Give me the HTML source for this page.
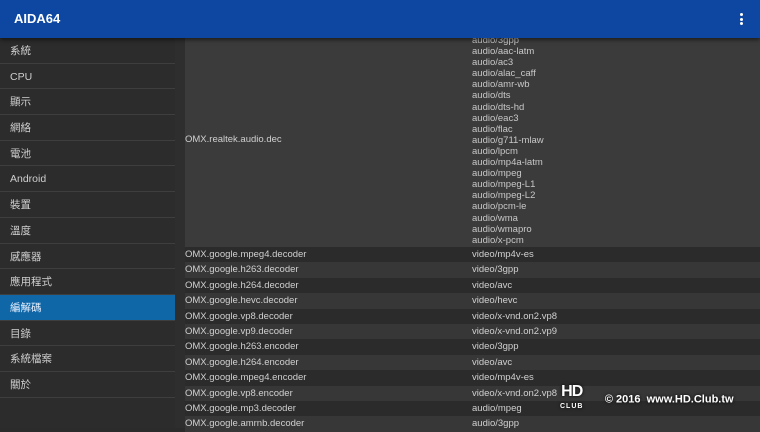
<!DOCTYPE html>
<html><head><meta charset="utf-8"><style>
*{margin:0;padding:0;box-sizing:border-box}
body{width:760px;height:428px;overflow:hidden;background:#2b2b2b;font-family:"Liberation Sans","Noto Sans CJK TC",sans-serif;color:#d0d0d0;position:relative}
#hdr{position:absolute;left:0;top:0;width:760px;height:38px;background:#0d47a1;box-shadow:0 2px 4px rgba(0,0,0,.5);z-index:5}
#hdr .t{position:absolute;left:14px;top:11px;font-size:13px;font-weight:bold;color:#fff}
#hdr .m{position:absolute;left:740px;top:13px;width:3px}
#hdr .m i{display:block;width:3px;height:3px;background:#fff;border-radius:50%;margin-bottom:1.5px}
#side{position:absolute;left:0;top:38px;width:175px;height:390px;background:#2c2c2c}
#side div{height:25.7px;line-height:26.5px;padding-left:10px;font-size:10.5px;color:#cfcfcf;border-bottom:1px solid #3e3e3e}
#side div.sel{background:#0f67a8;color:#e8f0ff}
#gap{position:absolute;left:175px;top:38px;width:10px;height:390px;background:#2e2e2e}
#tbl{position:absolute;left:185px;top:38px;width:575px}
.big{height:209px;background:#3b3b3b;position:relative;font-size:9.5px}
.big .n{position:absolute;left:0;top:96px}
.big .v{position:absolute;left:287px;top:-3px;line-height:11.1px;color:#c8c8c8}
.r{height:15.4px;line-height:15.4px;font-size:9.5px;position:relative;white-space:nowrap}
.r:nth-child(even){background:#2b2b2b}
.r:nth-child(odd){background:#373737}
.r span{position:absolute;left:287px}
#wm{position:absolute;left:560px;top:386px;color:#fff;font-size:11px;font-weight:bold;text-shadow:0 0 3px #000;white-space:nowrap}
</style></head><body>
<div id="hdr"><div class="t">AIDA64</div><div class="m"><i></i><i></i><i></i></div></div>
<div id="side">
<div>系統</div><div>CPU</div><div>顯示</div><div>網絡</div><div>電池</div><div>Android</div><div>裝置</div><div>溫度</div><div>感應器</div><div>應用程式</div><div class="sel">編解碼</div><div>目錄</div><div>系統檔案</div><div>關於</div>
</div>
<div id="gap"></div>
<div id="tbl">
<div class="big"><div class="n">OMX.realtek.audio.dec</div><div class="v">audio/3gpp<br>audio/aac-latm<br>audio/ac3<br>audio/alac_caff<br>audio/amr-wb<br>audio/dts<br>audio/dts-hd<br>audio/eac3<br>audio/flac<br>audio/g711-mlaw<br>audio/lpcm<br>audio/mp4a-latm<br>audio/mpeg<br>audio/mpeg-L1<br>audio/mpeg-L2<br>audio/pcm-le<br>audio/wma<br>audio/wmapro<br>audio/x-pcm</div></div>
<div class="r">OMX.google.mpeg4.decoder<span>video/mp4v-es</span></div>
<div class="r">OMX.google.h263.decoder<span>video/3gpp</span></div>
<div class="r">OMX.google.h264.decoder<span>video/avc</span></div>
<div class="r">OMX.google.hevc.decoder<span>video/hevc</span></div>
<div class="r">OMX.google.vp8.decoder<span>video/x-vnd.on2.vp8</span></div>
<div class="r">OMX.google.vp9.decoder<span>video/x-vnd.on2.vp9</span></div>
<div class="r">OMX.google.h263.encoder<span>video/3gpp</span></div>
<div class="r">OMX.google.h264.encoder<span>video/avc</span></div>
<div class="r">OMX.google.mpeg4.encoder<span>video/mp4v-es</span></div>
<div class="r">OMX.google.vp8.encoder<span>video/x-vnd.on2.vp8</span></div>
<div class="r">OMX.google.mp3.decoder<span>audio/mpeg</span></div>
<div class="r">OMX.google.amrnb.decoder<span>audio/3gpp</span></div>
</div>
<div id="wm"><span style="display:inline-block;font-size:16px;line-height:12px;letter-spacing:-1px;vertical-align:middle;text-align:center">HD<br><span style="font-size:7px;letter-spacing:1px">CLUB</span></span>&nbsp;&nbsp;&nbsp;&nbsp;&nbsp;&nbsp;&nbsp;© 2016&nbsp; www.HD.Club.tw</div>
</body></html>
